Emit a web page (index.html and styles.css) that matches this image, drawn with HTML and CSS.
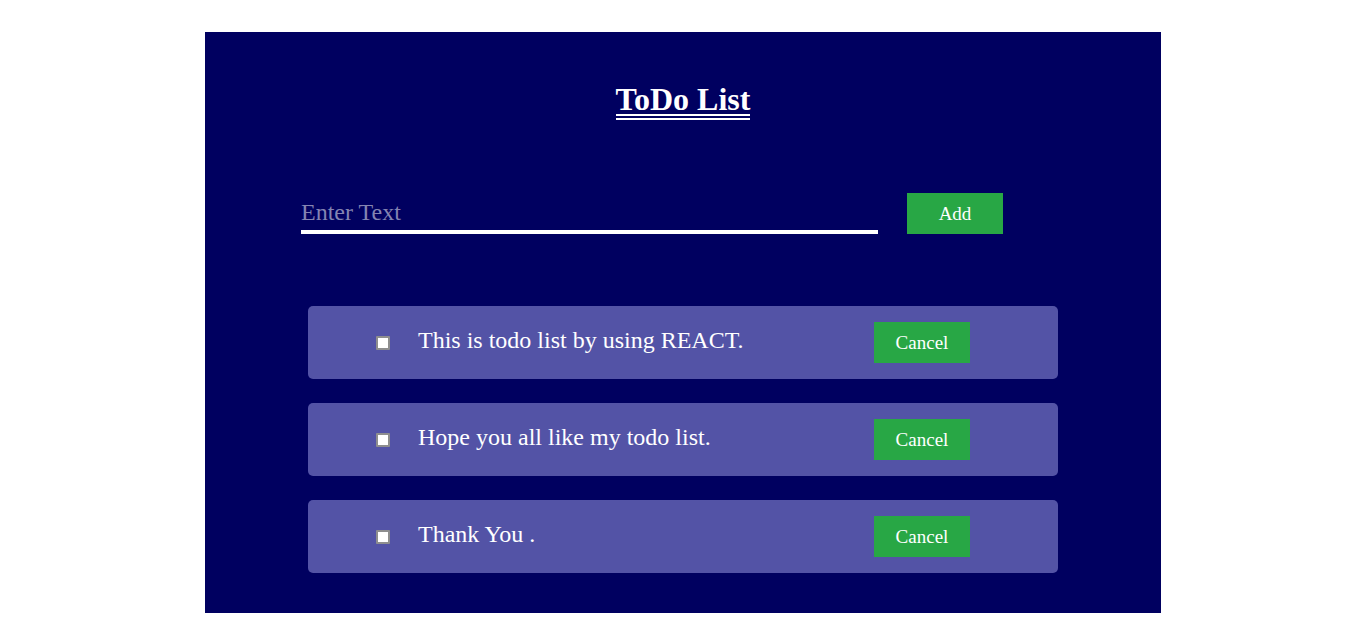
FILE: index.html
```html
<!DOCTYPE html>
<html lang="en">
<head>
<meta charset="utf-8">
<title>ToDo List</title>
<link rel="stylesheet" href="styles.css">
</head>
<body>
<div class="app">
  <h1 class="title"><span class="title-text">ToDo List</span></h1>
  <form class="add-form">
    <input class="add-input" type="text" placeholder="Enter Text">
    <button class="btn" type="button">Add</button>
  </form>
  <ul class="todo-list">
    <li class="todo-item">
      <input class="check" type="checkbox">
      <span class="todo-text">This is todo list by using REACT.</span>
      <button class="btn" type="button">Cancel</button>
    </li>
    <li class="todo-item">
      <input class="check" type="checkbox">
      <span class="todo-text">Hope you all like my todo list.</span>
      <button class="btn" type="button">Cancel</button>
    </li>
    <li class="todo-item">
      <input class="check" type="checkbox">
      <span class="todo-text">Thank You .</span>
      <button class="btn" type="button">Cancel</button>
    </li>
  </ul>
</div>
</body>
</html>
```

FILE: styles.css
```css
* { box-sizing: border-box; }

body {
  margin: 0;
  background: #ffffff;
  font-family: "Liberation Serif", "Times New Roman", serif;
}

.app {
  width: 956px;
  margin: 32px auto 0;
  background: #000060;
  padding: 52px 0 40px;
  display: flex;
  flex-direction: column;
}

.title {
  margin: 0;
  display: flex;
  flex-direction: column;
  align-items: center;
  color: #ffffff;
  font-size: 32px;
  font-weight: bold;
}

.title-text {
  line-height: 30px;
  border-bottom: 6px double #ffffff;
}

.add-form {
  margin: 73px 0 0;
  padding-left: 96px;
  display: flex;
  align-items: flex-end;
}

.add-input {
  box-sizing: content-box;
  width: 577px;
  height: 28px;
  padding: 0 0 4px;
  margin: 0;
  border: none;
  border-bottom: 4px solid #ffffff;
  background: transparent;
  color: #ffffff;
  font-family: "Liberation Serif", "Times New Roman", serif;
  font-size: 24px;
  outline: none;
}

.add-input::placeholder {
  color: #8484b2;
}

.btn {
  width: 96px;
  height: 41px;
  margin: 0;
  padding: 0;
  border: none;
  background: #28a745;
  color: #ffffff;
  font-family: "Liberation Serif", "Times New Roman", serif;
  font-size: 19px;
}

.add-form .btn { margin-left: 29px; }

.todo-list {
  list-style: none;
  margin: 72px auto 0;
  padding: 0;
  width: 750px;
  display: flex;
  flex-direction: column;
  gap: 24px;
}

.todo-item {
  height: 73px;
  background: #5353a6;
  border-radius: 5px;
  display: flex;
  align-items: center;
  padding: 0 88px 0 68px;
}

.check {
  appearance: none;
  -webkit-appearance: none;
  width: 14px;
  height: 14px;
  margin: 1px 0 0;
  border: 2px solid #8e8e8e;
  border-radius: 1px;
  background: #ffffff;
  flex: none;
}

.todo-text {
  flex: 1;
  margin-left: 28px;
  color: #ffffff;
  font-size: 24px;
  padding-bottom: 5px;
}
```
